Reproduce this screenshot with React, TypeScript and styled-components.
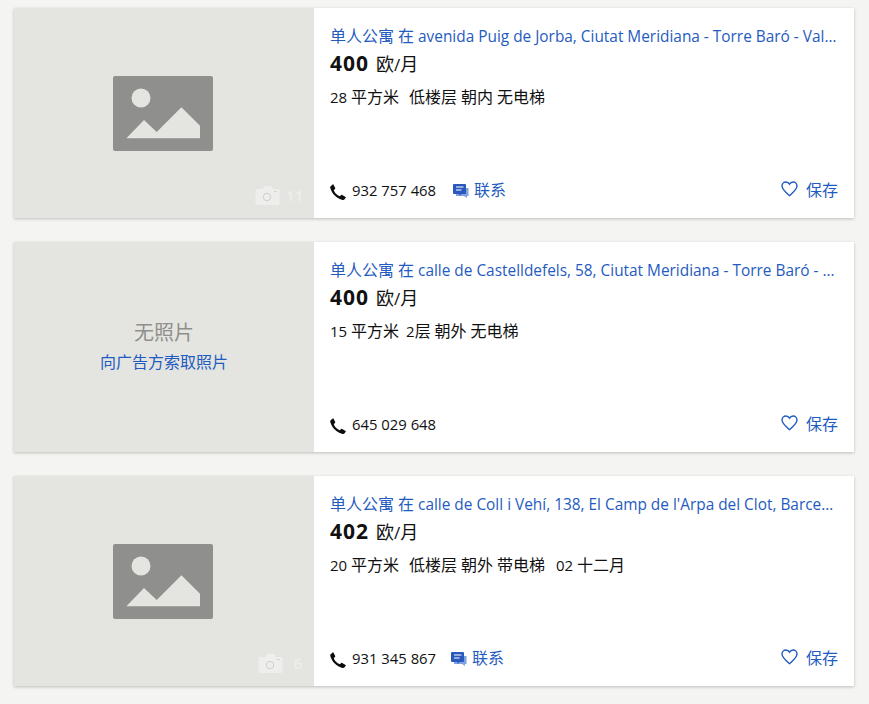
import React from "react";
import styled, { createGlobalStyle } from "styled-components";

const Global = createGlobalStyle`
  html, body { margin: 0; padding: 0; background: #f4f4f2; }
  body { font-family: "Open Sans", "Noto Sans CJK SC", sans-serif; color: #111; }
`;
const Page = styled.main`
  display: flex; flex-direction: column; gap: 24px;
  width: 840px; padding: 8px 15px 0 14px; height: 696px; overflow: hidden;
`;
const Card = styled.article`
  display: flex; height: 210px; flex: none; background: #fff;
  box-shadow: 0 1px 3px rgba(0,0,0,.22);
`;
const Media = styled.div`
  position: relative; width: 300px; flex: none; background: #e4e5e1;
  display: flex; flex-direction: column; align-items: center; justify-content: center;
`;
const Placeholder = styled.svg`
  display: block; margin-right: 2px;
`;
const PhotoCount = styled.div`
  position: absolute; right: ${p => p.$right}px; bottom: 13px;
  display: flex; align-items: center; gap: ${p => p.$gap}px;
  color: #eeeeec; font-size: 15px; font-weight: 600; line-height: 20px;
`;
const NoPhoto = styled.div`
  font-size: 20px; line-height: 26px; color: #8f8f8c;
`;
const Ask = styled.a`
  font-size: 16px; line-height: 22px; color: #1f5bc0; margin: 5px 0 2px;
`;
const Body = styled.div`
  flex: 1; min-width: 0; display: flex; flex-direction: column;
  padding: 16px; box-sizing: border-box;
`;
const Title = styled.a`
  display: block; font-size: 15.4px; line-height: 24px; color: #1f5bc0; padding-right: 1px;
  white-space: nowrap; overflow: hidden; text-overflow: ellipsis;
`;
const Han = styled.span`
  font-size: ${p => p.$size}px;
`;
const Price = styled.div`
  font-size: 17px; height: 26px; line-height: 26px; margin-top: 1px; color: #111;
  strong { font-size: 21px; font-weight: 700; letter-spacing: 1px; margin-right: 7px; }
`;
const Specs = styled.div`
  display: flex; font-size: 15px; line-height: 22px; margin-top: 10px; color: #111;
`;
const Spec = styled.span`
  margin-right: ${p => p.$gap}px; white-space: pre;
`;
const Footer = styled.div`
  margin-top: auto; display: flex; align-items: center; height: 22px;
  font-size: 14.85px; line-height: 22px; position: relative; top: -1px;
`;
const Tel = styled.span`
  display: flex; align-items: center; gap: 6px; color: #111; margin-right: ${p => p.$after}px;
  svg { display: block; margin-top: 3px; }
`;
const Contact = styled.a`
  display: flex; align-items: center; gap: 5px; color: #1f5bc0;
`;
const Save = styled.a`
  margin-left: auto; display: flex; align-items: center; gap: 8px; color: #1f5bc0;
  svg { display: block; margin-top: -3px; }
`;

const Mixed = ({ text, size }: { text: string; size: number }) => (
  <>
    {text.split(/([\u4e00-\u9fff]+)/).map((part, i) =>
      i % 2 ? <Han key={i} $size={size}>{part}</Han> : part
    )}
  </>
);

const ImageIcon = () => (
  <Placeholder width="100" height="75" viewBox="0 0 100 75">
    <rect width="100" height="75" rx="2" fill="#8f8f8d" />
    <circle cx="28" cy="22" r="9.5" fill="#e4e5e1" />
    <path d="M13.4 62.3 31 44l12.7 12 24.7-24.7L87 49.7v12.6z" fill="#e4e5e1" />
  </Placeholder>
);
const CameraIcon = () => (
  <svg width="25" height="19" viewBox="0 0 25 19">
    <path d="M1.5 3H7.5L9.5 0H16.5L18 3H23.5A1 1 0 0 1 24.500 4V18A1 1 0 0 1 23.500 19H1.500A1 1 0 0 1 .5 18V4A1 1 0 0 1 1.500 3Z" fill="#eeeeec" />
    <circle cx="12" cy="11" r="3.7" fill="none" stroke="#cfd0cc" strokeWidth="1" />
    <rect x="19" y="5" width="2.500" height="1" fill="#cfd0cc" />
  </svg>
);
const PhoneIcon = () => (
  <svg width="16" height="16" viewBox="0 0 16 16">
    <path d="M3.400.4 5.200 3.900c.2.400.1.700-.2 1L3.800 6.100c.6 2.500 3.400 5.500 6.100 6.200l1.300-1.200c.3-.3.700-.3 1-.1l3.400 2c.3.200.3.500.1.800l-1.100 1.500c-.5.600-1.200.8-2 .6C6.600 14.600 1.800 9.800.300 4.100.1 3.300.2 2.700.7 2.200L2.700.4c.3-.2.500-.2.700 0z" fill="#0d0d0d" />
  </svg>
);
const ChatIcon = () => (
  <svg width="16" height="15" viewBox="0 0 16 15">
    <path d="M3 5h12.500v8h-1.500v2l-3-2H3z" fill="#7fa3e0" />
    <path d="M1 1h11a1 1 0 0 1 1 1v8a1 1 0 0 1-1 1H8.500l-2 2V11H1a1 1 0 0 1-1-1V2a1 1 0 0 1 1-1z" fill="#2a58bd" />
    <path d="M3 4h7.500M3 7h5.500" stroke="#fff" strokeWidth="1.200" />
  </svg>
);
const HeartIcon = () => (
  <svg width="17" height="16" viewBox="0 0 17 16">
    <path d="M8.500 14.700C3.800 10.800 1 8.300 1 5.100 1 2.800 2.700 1 4.900 1c1.500 0 2.800.8 3.600 2.200C9.300 1.800 10.600 1 12.100 1 14.300 1 16 2.800 16 5.100c0 3.200-2.800 5.700-7.500 9.600z" fill="none" stroke="#1f5bc0" strokeWidth="1.400" />
  </svg>
);

type Item = {
  title: string; price: string; specs: [string, number][]; tel: string; telAfter: number;
  photos?: string; right?: number; gap?: number; contact?: boolean;
};
const items: Item[] = [
  {
    title: "单人公寓 在 avenida Puig de Jorba, Ciutat Meridiana - Torre Baró - Vallbona, Barcelona",
    price: "400",
    specs: [["28 平方米", 10], ["低楼层 朝内 无电梯", 0]],
    tel: "932 757 468", telAfter: 17, photos: "11", right: 11, gap: 6, contact: true,
  },
  {
    title: "单人公寓 在 calle de Castelldefels, 58, Ciutat Meridiana - Torre Baró - Vallbona, Barcelona",
    price: "400",
    specs: [["15 平方米", 7], ["2层 朝外 无电梯", 0]],
    tel: "645 029 648", telAfter: 17,
  },
  {
    title: "单人公寓 在 calle de Coll i Vehí, 138, El Camp de l'Arpa del Clot, Barcelona",
    price: "402",
    specs: [["20 平方米", 10], ["低楼层 朝外 带电梯", 11], ["02 十二月", 0]],
    tel: "931 345 867", telAfter: 15, photos: "6", right: 12, gap: 10, contact: true,
  },
];

export default function App() {
  return (
    <Page>
      <Global />
      {items.map(it => (
        <Card key={it.tel}>
          <Media>
            {it.photos ? (
              <>
                <ImageIcon />
                <PhotoCount $right={it.right} $gap={it.gap}>
                  <CameraIcon />
                  <span>{it.photos}</span>
                </PhotoCount>
              </>
            ) : (
              <>
                <NoPhoto>无照片</NoPhoto>
                <Ask>向广告方索取照片</Ask>
              </>
            )}
          </Media>
          <Body>
            <Title><Mixed text={it.title} size={16} /></Title>
            <Price><strong>{it.price}</strong><Mixed text="欧/月" size={18} /></Price>
            <Specs>
              {it.specs.map(([s, g]) => <Spec key={s} $gap={g}><Mixed text={s} size={16} /></Spec>)}
            </Specs>
            <Footer>
              <Tel $after={it.telAfter}><PhoneIcon />{it.tel}</Tel>
              {it.contact && <Contact><ChatIcon /><Han $size={16}>联系</Han></Contact>}
              <Save><HeartIcon /><Han $size={16}>保存</Han></Save>
            </Footer>
          </Body>
        </Card>
      ))}
    </Page>
  );
}
